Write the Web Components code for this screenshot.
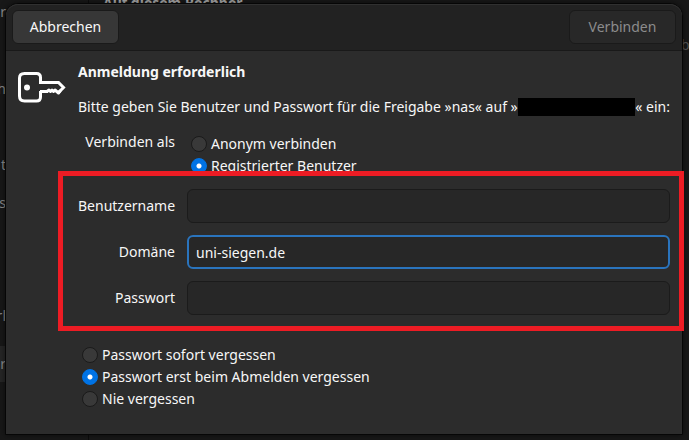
<!DOCTYPE html>
<html lang="de">
<head>
<meta charset="utf-8">
<title>Anmeldung erforderlich</title>
<style>
    body {
        margin: 0;
        min-height: 100vh;
        background: #181818;
        color: #f7f7f7;
        font: 14px/22px "Noto Sans", "Open Sans", sans-serif;
        overflow: hidden;
    }
</style>
</head>
<body>
<file-window></file-window>
<login-dialog></login-dialog>

<script>
// the dimmed file manager behind the dialog
const windowTemplate = `
    <style>
        :host {
            position: absolute;
            inset: 0;
            display: grid;
            grid-template-columns: 89px 1fr 8px;
            color: #8a8a8a;
            background: #181818;
            z-index: -1;
        }
        nav {
            display: grid;
            grid-template-rows: 24px 46px 38px 38px 38px 38px 75px 38px 11px 36px 1fr;
            border-right: 1px solid #0c0c0c;
        }
        nav div { display: flex; align-items: center; }
        nav span { display: flex; justify-content: flex-end; width: 6px; }
        nav .current { background: #262626; }
        h2 { margin: 0; padding: 0 14px; font-size: 14px; line-height: 6px; color: #aaa; }
        aside { padding-top: 34px; color: #555; }
    </style>
    <nav>
        <div><span>er</span></div>
        <div></div>
        <div><span>h</span></div>
        <div></div>
        <div><span>t</span></div>
        <div><span>ds</span></div>
        <div></div>
        <div><span>rl</span></div>
        <div></div>
        <div class="current"><span>r</span></div>
    </nav>
    <h2>Auf diesem Rechner</h2>
    <aside>b</aside>
`;

class FileWindow extends HTMLElement {
    constructor() {
        super();
        this.attachShadow({ mode: 'open' }).innerHTML = windowTemplate;
    }
}

class KeyIcon extends HTMLElement {
    constructor() {
        super();
        this.attachShadow({ mode: 'open' }).innerHTML = `
            <style>
                :host { display: block; }
                svg { display: block; }
            </style>
            <svg width="48" height="32" viewBox="0 0 48 32" fill="none" stroke="#fff" stroke-width="3" aria-hidden="true">
                <path d="M22.5 20V26Q22.5 30 18.5 30H6.5Q1.5 30 1.5 25V7Q1.5 2.5 6.5 2.5H18.5Q22.5 2.5 22.5 6.5V11.5H40.5L45.5 16.5L40 22"/>
                <path d="M22 20.5H30"/>
                <path stroke-width="3" stroke-linejoin="round" d="M29 20.5L31 19L32.5 20.5L34 19L35.5 20.5L37 19L40.5 22L42.5 19.5"/>
                <circle cx="9" cy="16.5" r="3" fill="#fff" stroke="none"/>
            </svg>
        `;
    }
}

class DialogButton extends HTMLElement {
    constructor() {
        super();
        this.attachShadow({ mode: 'open' }).innerHTML = `
            <style>
                :host { display: block; }
                button {
                    box-sizing: border-box;
                    height: 34px;
                    padding: 0 16px;
                    min-width: 107px;
                    border: 1px solid #1a1a1a;
                    border-radius: 6px;
                    background: #373737;
                    color: inherit;
                    font: inherit;
                }
                button:disabled { background: #282828; color: #8c8c8c; }
            </style>
            <button type="button"><slot></slot></button>
        `;
        this.shadowRoot.querySelector('button').disabled = this.hasAttribute('disabled');
    }
}

class TextField extends HTMLElement {
    constructor() {
        super();
        this.attachShadow({ mode: 'open', delegatesFocus: true }).innerHTML = `
            <style>
                :host {
                    display: grid;
                    grid-template-columns: var(--label-width) 1fr;
                    column-gap: 12px;
                    align-items: center;
                }
                label { text-align: right; }
                input {
                    box-sizing: border-box;
                    width: 100%;
                    height: 34px;
                    padding: 0 8px;
                    border: 1px solid #1b1b1b;
                    border-radius: 6px;
                    background: #272727;
                    color: inherit;
                    font: inherit;
                    outline: none;
                }
                :host([active]) input { border: 2px solid #2a74bd; padding: 0 7px; }
            </style>
            <label for="field"><slot></slot></label>
            <input id="field">
        `;
        const input = this.shadowRoot.querySelector('input');
        input.type = this.getAttribute('type') || 'text';
        input.value = this.getAttribute('value') || '';
    }
}

// options are separated by "|", selected is the index of the checked one
class RadioList extends HTMLElement {
    constructor() {
        super();
        const options = this.getAttribute('options').split('|');
        const selected = Number(this.getAttribute('selected'));
        this.attachShadow({ mode: 'open' }).innerHTML = `
            <style>
                :host { display: block; }
                label { display: flex; align-items: center; gap: 4px; height: 22px; white-space: nowrap; }
                input {
                    appearance: none;
                    box-sizing: border-box;
                    flex: none;
                    width: 16px;
                    height: 16px;
                    margin: 0 0 0 4px;
                    border: 1px solid #1a1a1a;
                    border-radius: 50%;
                    background: #393939;
                }
                input:checked {
                    border-color: #0073e5;
                    background: radial-gradient(circle, #fff 2px, #0073e5 3px);
                }
            </style>
            ${options.map((text, i) => `
                <label><input type="radio" name="choice" ${i === selected ? 'checked' : ''}>${text}</label>
            `).join('')}
        `;
    }
}

const dialogTemplate = `
    <style>
        :host {
            --label-width: 97px;
            display: block;
            margin: 3px 6px 5px 5px;
            border: 1px solid #060606;
            border-radius: 13px 13px 0 0;
            background: #2c2c2c;
            box-shadow: 0 0 6px #0008;
        }
        header {
            display: flex;
            justify-content: space-between;
            padding: 6px;
            border-bottom: 1px solid #191919;
            border-radius: 12px 12px 0 0;
            background: #222;
            box-shadow: inset 0 1px #303030;
        }
        main {
            display: grid;
            grid-template-columns: 48px 1fr;
            column-gap: 12px;
            padding: 10px 12px 24px;
        }
        key-icon { margin-top: 10px; }
        h1 { margin: 0 0 13px; font-size: 14px; line-height: 22px; }
        p { display: flex; align-items: center; margin: 0 0 15px; white-space: nowrap; }
        .redacted { flex: 1; height: 18px; background: #000; }
        .connect {
            display: grid;
            grid-template-columns: var(--label-width) 1fr;
            column-gap: 12px;
            margin-bottom: 12px;
        }
        .connect span { text-align: right; line-height: 18px; }
        .fields { position: relative; display: grid; gap: 12px; margin-bottom: 29px; }
        .marker {
            position: absolute;
            inset: -18px -14px -16px -20px;
            border: 5px solid #ed1c24;
            pointer-events: none;
        }
    </style>
    <header>
        <dialog-button>Abbrechen</dialog-button>
        <dialog-button disabled>Verbinden</dialog-button>
    </header>
    <main>
        <key-icon></key-icon>
        <form>
            <h1>Anmeldung erforderlich</h1>
            <p>Bitte geben Sie Benutzer und Passwort für die Freigabe »nas« auf »<span class="redacted"></span>« ein:</p>
            <div class="connect">
                <span>Verbinden als</span>
                <radio-list options="Anonym verbinden|Registrierter Benutzer" selected="1"></radio-list>
            </div>
            <div class="fields">
                <text-field>Benutzername</text-field>
                <text-field value="uni-siegen.de" active>Domäne</text-field>
                <text-field type="password">Passwort</text-field>
                <div class="marker"></div>
            </div>
            <radio-list options="Passwort sofort vergessen|Passwort erst beim Abmelden vergessen|Nie vergessen" selected="1"></radio-list>
        </form>
    </main>
`;

class LoginDialog extends HTMLElement {
    constructor() {
        super();
        this.attachShadow({ mode: 'open' }).innerHTML = dialogTemplate;
    }
}

customElements.define('file-window', FileWindow);
customElements.define('key-icon', KeyIcon);
customElements.define('dialog-button', DialogButton);
customElements.define('text-field', TextField);
customElements.define('radio-list', RadioList);
customElements.define('login-dialog', LoginDialog);
</script>
</body>
</html>
